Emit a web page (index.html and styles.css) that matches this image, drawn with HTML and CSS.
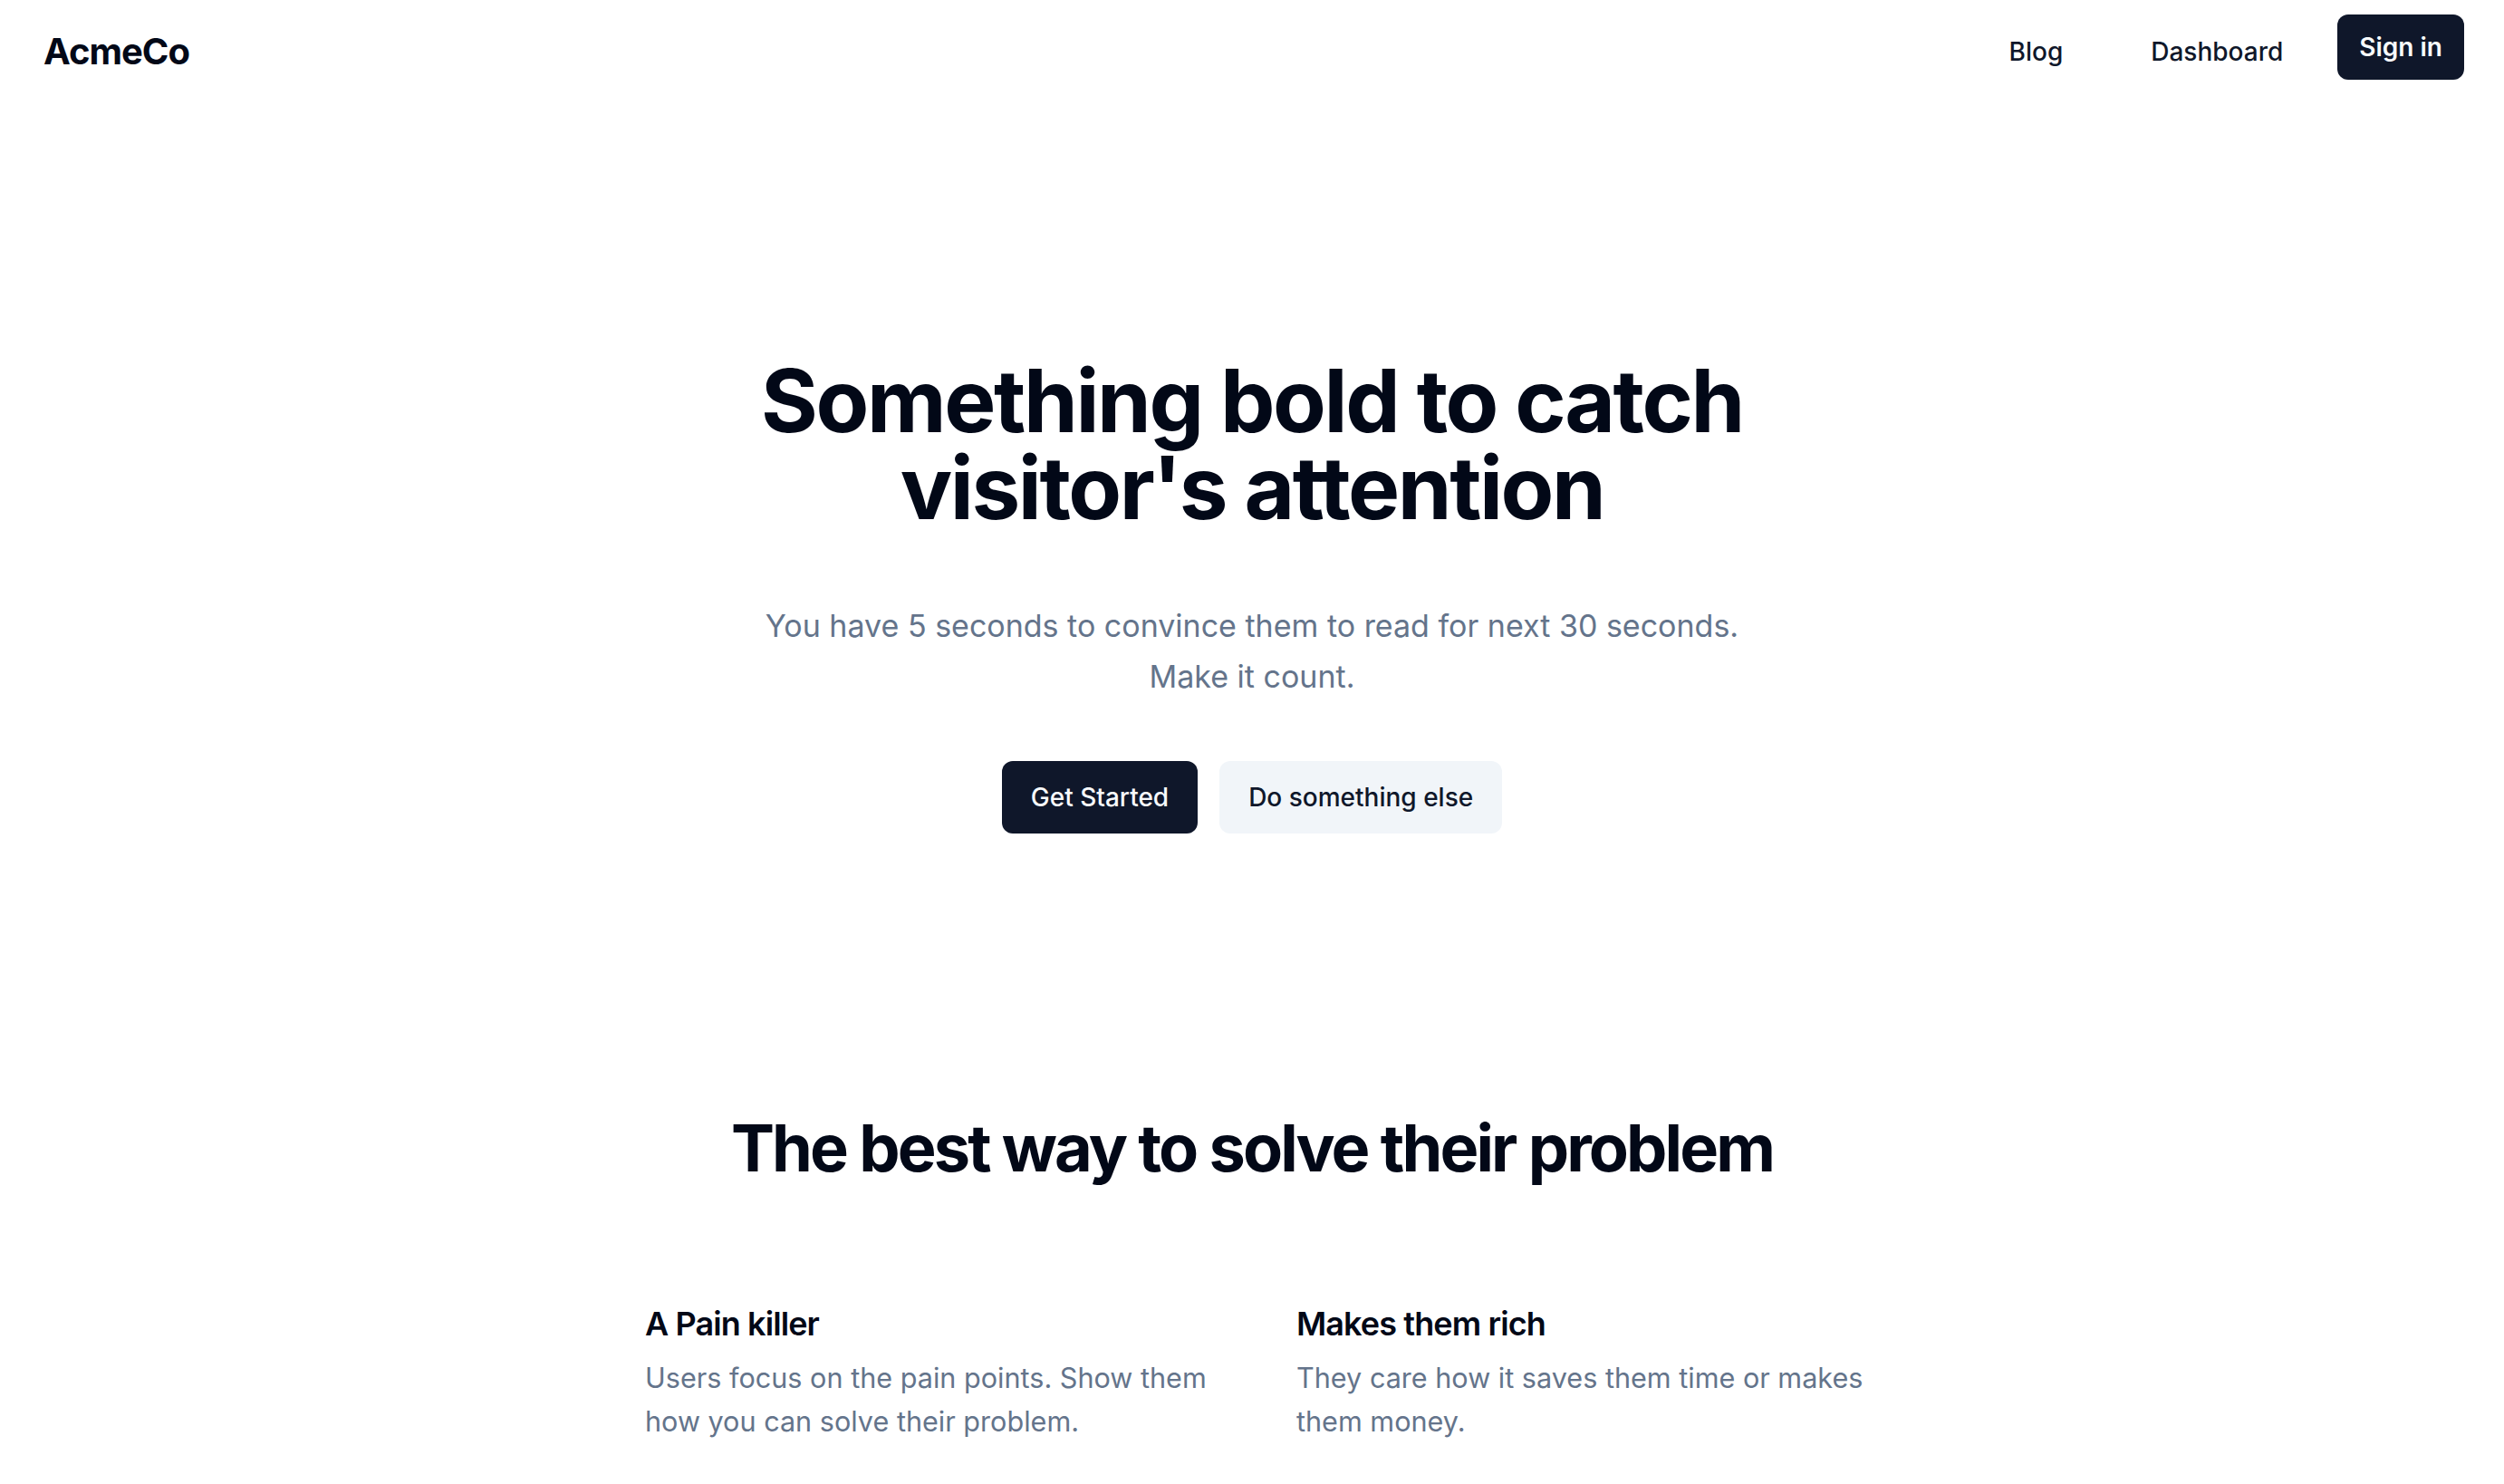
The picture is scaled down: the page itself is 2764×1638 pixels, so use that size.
FILE: index.html
```html
<!DOCTYPE html>
<html lang="en">
<head>
<meta charset="utf-8">
<title>AcmeCo</title>
<link rel="stylesheet" href="styles.css">
</head>
<body>
<header class="site-header">
  <a class="logo" href="#">AcmeCo</a>
  <nav class="nav">
    <a class="nav-link" href="#">Blog</a>
    <a class="nav-link nav-link-last" href="#">Dashboard</a>
    <a class="btn btn-primary btn-signin" href="#">Sign in</a>
  </nav>
</header>
<main>
  <section class="hero">
    <h1 class="hero-title">Something bold to catch<br>visitor's attention</h1>
    <p class="hero-sub">You have 5 seconds to convince them to read for next 30 seconds.<br>Make it count.</p>
    <div class="hero-actions">
      <a class="btn btn-primary btn-lg" href="#">Get Started</a>
      <a class="btn btn-secondary btn-lg" href="#">Do something else</a>
    </div>
  </section>
  <section class="features">
    <h2 class="features-title">The best way to solve their problem</h2>
    <div class="feature-grid">
      <div class="feature">
        <h3 class="feature-title">A Pain killer</h3>
        <p class="feature-text">Users focus on the pain points. Show them how you can solve their problem.</p>
      </div>
      <div class="feature">
        <h3 class="feature-title">Makes them rich</h3>
        <p class="feature-text">They care how it saves them time or makes them money.</p>
      </div>
    </div>
  </section>
</main>
</body>
</html>
```
FILE: styles.css
```css
* { box-sizing: border-box; }
html, body { margin: 0; padding: 0; }
body {
  font-family: Inter, "Noto Sans", sans-serif;
  color: #020817;
  background: #ffffff;
}
a { text-decoration: none; color: inherit; }
h1, h2, h3, p { margin: 0; }

.site-header {
  display: flex;
  align-items: center;
  justify-content: space-between;
  height: 114px;
  padding: 0 44px 0 48px;
}
.logo {
  font-size: 40px;
  line-height: 56px;
  font-weight: 700;
  letter-spacing: -0.025em;
  color: #020817;
}
.nav {
  display: flex;
  align-items: center;
}
.nav-link {
  font-size: 28px;
  line-height: 40px;
  font-weight: 500;
  color: #0f172a;
  padding: 0 16px;
  margin-right: 65px;
}
.nav-link-last { margin-right: 44px; }

.btn {
  display: inline-flex;
  align-items: center;
  justify-content: center;
  border-radius: 12px;
  font-size: 28px;
  font-weight: 500;
  white-space: nowrap;
}
.btn-primary { background: #0f172a; color: #f8fafc; }
.btn-secondary { background: #f1f5f9; color: #0f172a; }
.btn-signin {
  height: 72px;
  padding: 0 24px;
  font-weight: 600;
  margin-bottom: 10px;
}
.btn-lg {
  height: 80px;
  padding: 0 32px;
}

.hero {
  display: flex;
  flex-direction: column;
  align-items: center;
  text-align: center;
  padding-top: 280px;
}
.hero-title {
  font-size: 96px;
  line-height: 96px;
  font-weight: 700;
  letter-spacing: -0.025em;
  color: #020817;
}
.hero-sub {
  margin-top: 77px;
  font-size: 34px;
  line-height: 56px;
  color: #64748b;
}
.hero-actions {
  display: flex;
  gap: 24px;
  margin-top: 65px;
}

.features {
  padding-top: 307px;
  display: flex;
  flex-direction: column;
  align-items: center;
}
.features-title {
  font-size: 72px;
  line-height: 80px;
  font-weight: 700;
  letter-spacing: -0.04em;
  color: #020817;
  text-align: center;
}
.feature-grid {
  margin-top: 126px;
  width: 1340px;
  display: grid;
  grid-template-columns: 640px 640px;
  column-gap: 79px;
}
.feature-title {
  font-size: 36px;
  line-height: 56px;
  font-weight: 600;
  letter-spacing: -0.025em;
  color: #020817;
}
.feature-text {
  margin-top: 8px;
  font-size: 30.6px;
  line-height: 48px;
  color: #64748b;
}
```
